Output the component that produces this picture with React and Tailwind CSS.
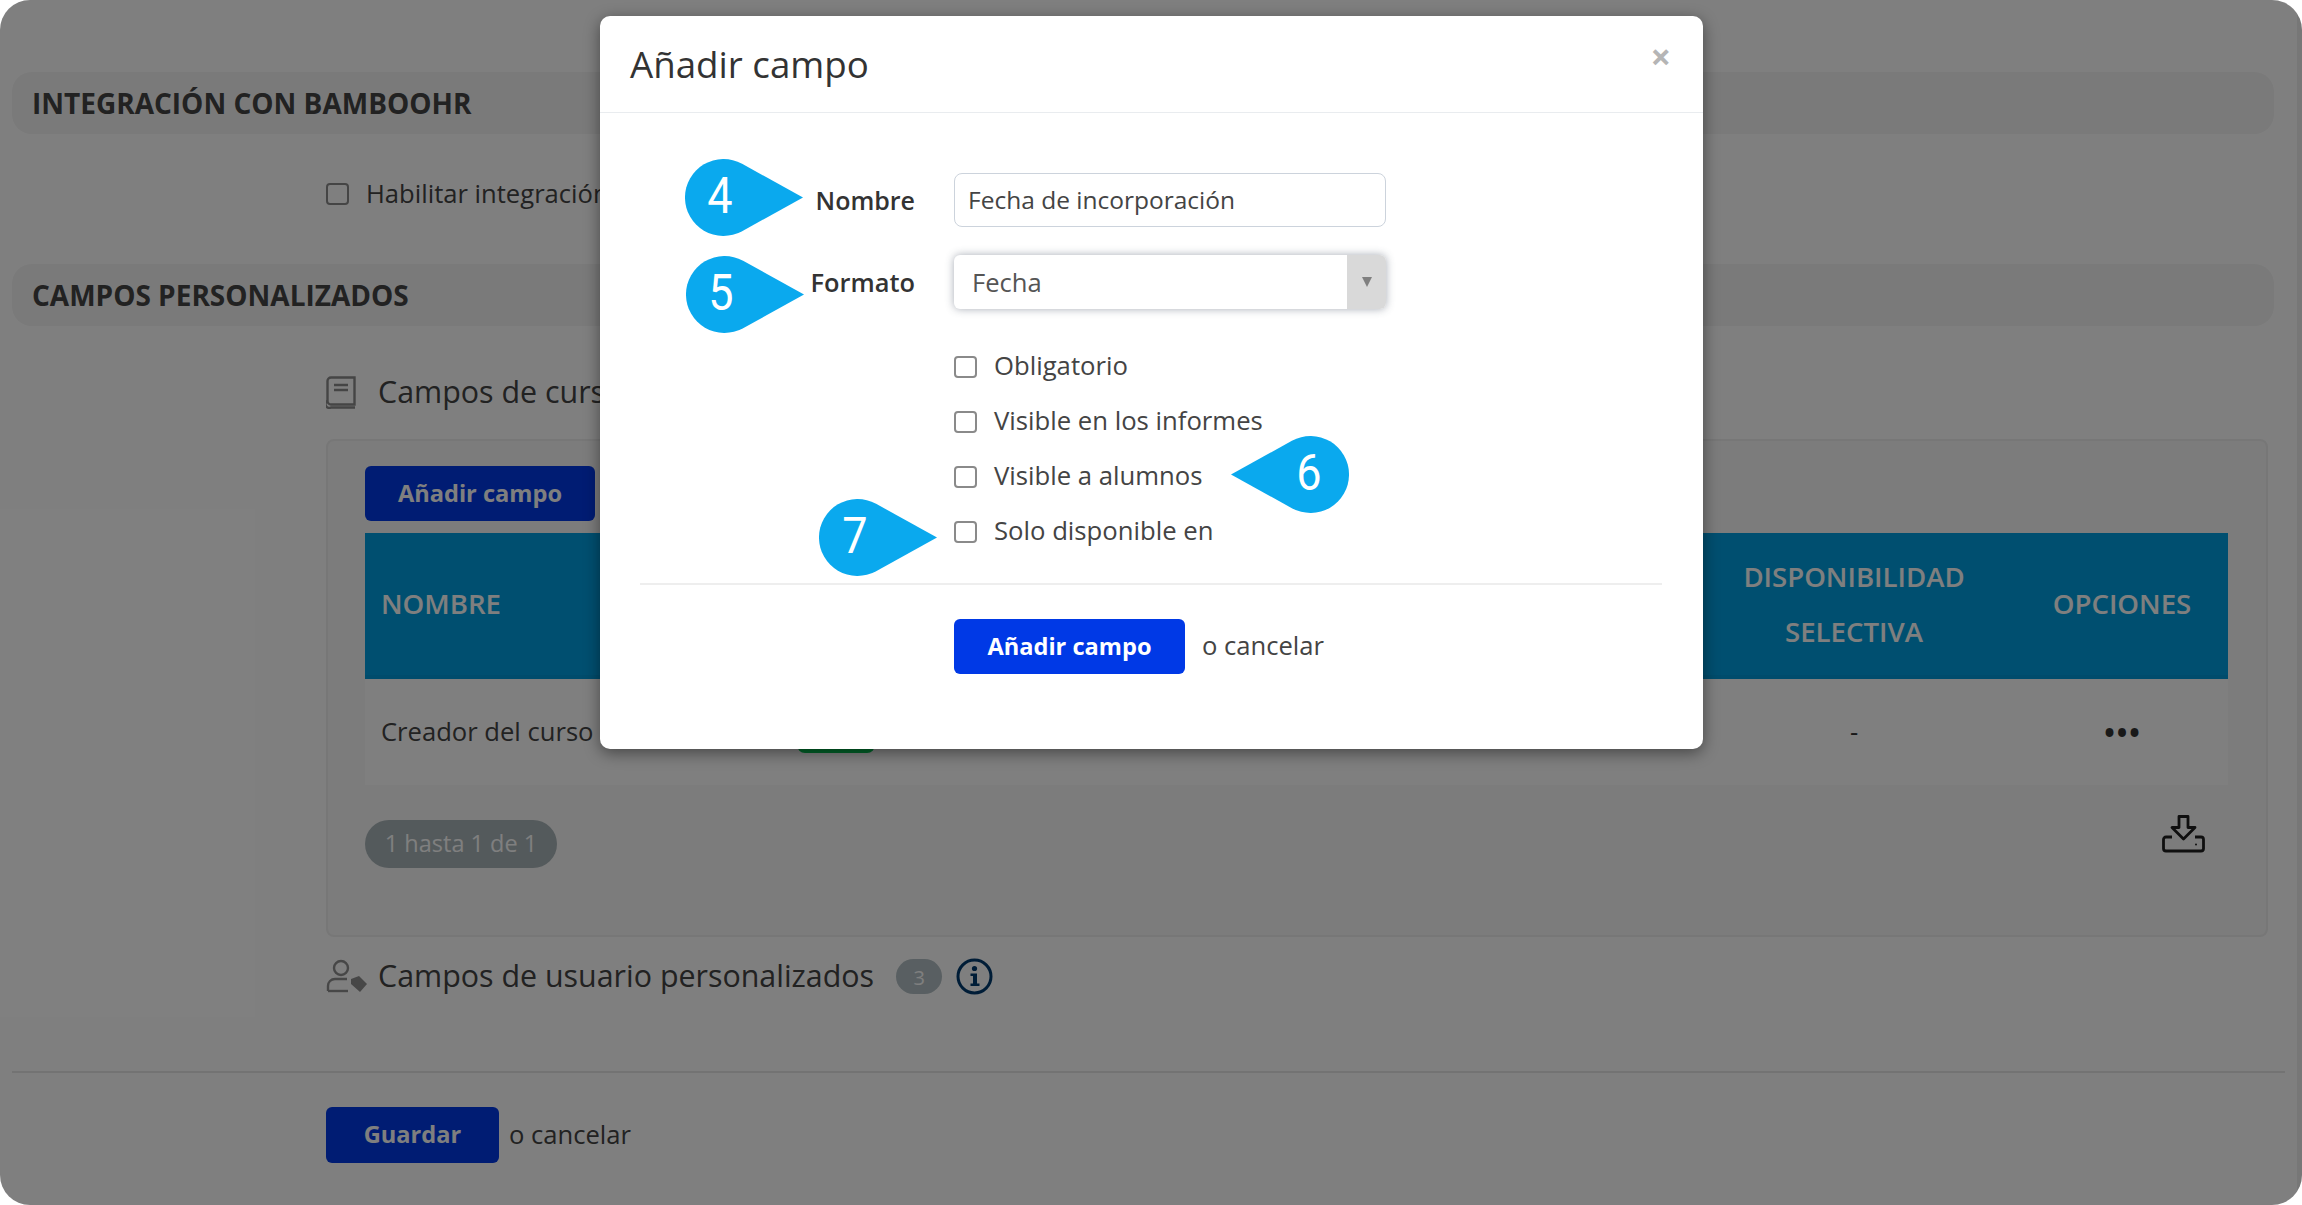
import React from 'react';

const BookIcon = () => (
  <svg width="30" height="33" viewBox="0 0 30 33" fill="none" stroke="currentColor" strokeWidth="2.4" className="text-[#8a8a8a]">
    <path d="M5 1.5h23.5v27H5a3.5 3.5 0 0 1-3.5-3.5V5A3.5 3.5 0 0 1 5 1.5z" />
    <path d="M1.5 25a3.5 3.5 0 0 0 3.5 6.5h24" />
    <path d="M8 9h14M8 14h14" />
  </svg>
);

const UserTagIcon = () => (
  <svg width="42" height="34" viewBox="0 0 42 34" fill="none" stroke="currentColor" strokeWidth="2.4" className="text-[#8f8f8f]">
    <circle cx="15" cy="9" r="7" />
    <path d="M2 32v-5c0-4 3-7 7-7h12" />
    <path d="M2 32h20" />
    <path d="M25 20l8-3 8 8-7 8-9-8z" fill="currentColor" stroke="none" />
  </svg>
);

const DownloadIcon = () => (
  <svg width="43" height="38" viewBox="0 0 43 38" fill="none" stroke="#1f1f1f" strokeWidth="2.8" strokeLinejoin="round" className="-mt-[5px]">
    <path d="M17 1.5h9v11h7L21.5 24 10 12.500h7z" />
    <path d="M10 22H4a2.500 2.500 0 0 0-2.500 2.500v9A2.500 2.500 0 0 0 4 36h35a2.500 2.500 0 0 0 2.500-2.500v-9A2.500 2.500 0 0 0 39 22h-6" />
    <circle cx="34" cy="29.500" r="1" fill="#1f1f1f" stroke="none" />
  </svg>
);

const InfoIcon = () => (
  <svg width="37" height="37" viewBox="0 0 37 37" fill="none">
    <circle cx="18.500" cy="18.500" r="16.500" stroke="#003a6e" strokeWidth="3" />
    <circle cx="18.500" cy="10.500" r="2.600" fill="#003a6e" />
    <path d="M14.500 15.500h6.500v10h2.500v2.500h-9v-2.500h2.500v-7.500h-2.500z" fill="#003a6e" />
  </svg>
);

const Checkbox = () => (
  <span className="block h-[22px] w-[23px] shrink-0 rounded-[4px] border-2 border-[#8a8a8a] bg-white" />
);

const CheckRow = ({ label }) => (
  <div className="flex h-[55px] items-center gap-[17px]">
    <Checkbox />
    <span className="text-[25.7px] text-[#444]">{label}</span>
  </div>
);

// blue callouts drawn over the form
const Callout = ({ number, className, flip = false, textClass }) => (
  <div className={`absolute h-[77px] w-[118px] ${className}`}>
    <svg width="118" height="77" viewBox="0 0 118 77" className={flip ? '-scale-x-100' : ''}>
      <path d="M57.100 4.800 L118 38.500 L57.100 72.200 A38.500 38.500 0 1 1 57.100 4.800 Z" fill="#0aa9ee" />
    </svg>
    <span className={`absolute top-0 flex h-[75px] w-[50px] scale-x-90 items-center justify-center font-['Roboto',sans-serif] text-[50px] text-white ${textClass}`}>
      {number}
    </span>
  </div>
);

const Dialog = () => (
  <div className="absolute left-[600px] top-4 h-[733px] w-[1103px] rounded-[10px] bg-white shadow-[0_4px_16px_rgba(0,0,0,0.45)]">
    <div className="flex h-[97px] items-center justify-between border-b border-[#e9ecef] pl-[30px] pr-[32px]">
      <h3 className="text-[36.7px] leading-none text-[#333]">Añadir campo</h3>
      <span className="-mt-[14px] text-[36px] font-bold leading-none text-[#b5b5b5]">×</span>
    </div>
    <div className="pl-[40px] pr-[41px]">
      <div className="flex items-center pt-[60px]">
        <label className="w-[275px] pt-[2px] text-right text-[25px] font-semibold text-[#333]">Nombre</label>
        <div className="ml-[39px] flex h-[54px] w-[432px] items-center rounded-[8px] border border-[#ccd3dc] px-[13px] text-[24.500px] text-[#444]">
          Fecha de incorporación
        </div>
      </div>
      <div className="mt-[28px] flex items-center">
        <label className="w-[275px] text-right text-[25.400px] font-semibold text-[#333]">Formato</label>
        <div className="ml-[39px] flex h-[54px] w-[432px] items-center overflow-hidden rounded-[6px] shadow-[0_0_8px_rgba(60,70,90,0.45)]">
          <span className="flex-1 pl-[18px] pt-[2px] text-[25.600px] text-[#555]">Fecha</span>
          <span className="flex h-full w-[39px] items-center justify-center bg-[#d9d9d9]">
            <svg width="12" height="12" viewBox="0 0 12 12"><path d="M1 1h10L6 11z" fill="#808080" /></svg>
          </span>
        </div>
      </div>
      <div className="ml-[314px] mt-[30px]">
        <CheckRow label="Obligatorio" />
        <CheckRow label="Visible en los informes" />
        <CheckRow label="Visible a alumnos" />
        <CheckRow label="Solo disponible en" />
      </div>
      <div className="mt-[24px] border-t-2 border-[#eeeeee]" />
      <div className="ml-[314px] mt-[34px] flex items-center gap-[17px]">
        <button className="h-[55px] w-[231px] rounded-[6px] bg-[#0039e6] text-[23.600px] font-bold text-white">Añadir campo</button>
        <span className="text-[25.600px] text-[#444]">o cancelar</span>
      </div>
    </div>
    <Callout number="4" className="left-[85px] top-[143px]" textClass="left-[10px]" />
    <Callout number="5" className="left-[86px] top-[240px]" textClass="left-[10px]" />
    <Callout number="6" flip className="left-[631px] top-[420px]" textClass="left-[53px]" />
    <Callout number="7" className="left-[219px] top-[483px]" textClass="left-[11px]" />
  </div>
);

export default function App() {
  return (
    <div className="h-[1205px] w-[2302px] overflow-hidden bg-white font-['Open_Sans',sans-serif] text-[25.600px] text-[#333]">
      <div className="relative h-full w-full overflow-hidden rounded-[30px]">
        <main className="h-full border-r-[5px] border-[#eeeeee] pt-[72px]">
          <div className="mx-3 flex h-[62px] w-[2262px] items-center rounded-[20px] bg-[#f4f4f4] pl-5 text-[28px] font-bold text-[#444]">
            INTEGRACIÓN CON BAMBOOHR
          </div>
          <div className="ml-[326px] mt-[42px] flex h-[36px] items-center gap-[17px]">
            <Checkbox />
            <span className="text-[#444]">Habilitar integración</span>
          </div>
          <div className="mx-3 mt-[52px] flex h-[62px] w-[2262px] items-center rounded-[20px] bg-[#f4f4f4] pl-5 text-[28px] font-bold text-[#444]">
            CAMPOS PERSONALIZADOS
          </div>
          <div className="ml-[326px] mt-[48px] flex h-[36px] items-center gap-[22px]">
            <BookIcon />
            <span className="text-[30.400px] font-medium text-[#444]">Campos de curso personalizados</span>
          </div>
          <section className="ml-[326px] mt-[29px] h-[498px] w-[1942px] rounded-[8px] border-2 border-[#eeeeee] bg-[#f8f8f8] pl-[37px] pt-[25px]">
            <button className="h-[55px] w-[230px] rounded-[6px] bg-[#0039e6] text-[23.600px] font-bold text-white">Añadir campo</button>
            <div className="mt-[12px] w-[1863px]">
              <div className="grid h-[146px] grid-cols-[432px_1fr_320px_214px] items-center border-b-4 border-[#0099d8] bg-[#009fe0] text-[27.600px] font-semibold text-white">
                <span className="pl-4">NOMBRE</span>
                <span />
                <span className="text-center leading-[55px]">DISPONIBILIDAD<br />SELECTIVA</span>
                <span className="pl-[2px] text-center">OPCIONES</span>
              </div>
              <div className="grid h-[106px] grid-cols-[432px_1fr_320px_214px] items-center bg-white">
                <span className="pl-4 text-[#444]">Creador del curso</span>
                <span className="block h-[42px] w-[78px] rounded-[8px] bg-[#00c853]" />
                <span className="text-center">-</span>
                <span className="pl-[4px] text-center text-[28px] font-bold leading-none tracking-[2px] text-[#333]">•••</span>
              </div>
            </div>
            <div className="mt-[35px] flex w-[1840px] items-start justify-between">
              <span className="flex h-[48px] w-[192px] items-center justify-center rounded-full bg-[#a8b4b8] text-[23.500px] text-white">1 hasta 1 de 1</span>
              <DownloadIcon />
            </div>
          </section>
          <div className="ml-[326px] mt-[20px] flex h-[38px] items-center">
            <UserTagIcon />
            <span className="ml-[10px] text-[30.400px] font-medium text-[#444]">Campos de usuario personalizados</span>
            <span className="ml-[22px] flex h-[35px] w-[46px] items-center justify-center rounded-full bg-[#b2bfc4] pt-[3px] text-[20px] text-white">3</span>
            <span className="ml-[14px] flex"><InfoIcon /></span>
          </div>
          <div className="mx-3 mt-[76px] border-t-2 border-[#e6e6e6]" />
          <div className="ml-[326px] mt-[34px] flex items-center gap-[10px]">
            <button className="h-[56px] w-[173px] rounded-[6px] bg-[#0039e6] text-[23.600px] font-bold text-white">Guardar</button>
            <span className="text-[#444]">o cancelar</span>
          </div>
        </main>
        <div className="absolute inset-0 bg-black/50" />
        <Dialog />
      </div>
    </div>
  );
}
